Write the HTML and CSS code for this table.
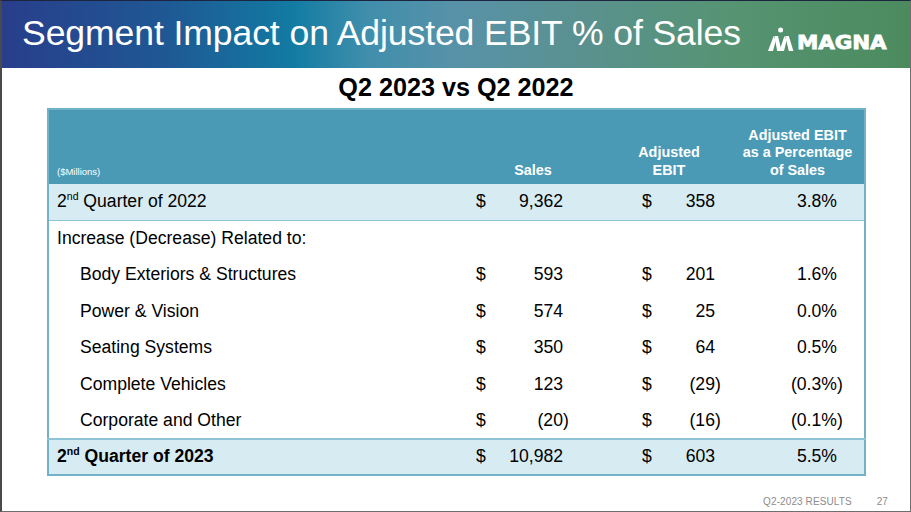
FILE: index.html
```html
<!DOCTYPE html>
<html lang="en">
<head>
<meta charset="utf-8">
<title>Segment Impact on Adjusted EBIT % of Sales</title>
<link rel="stylesheet" href="styles.css">
</head>
<body>
<div class="slide">
  <header class="band">
    <h1 class="title">Segment Impact on Adjusted EBIT % of Sales</h1>
    <div class="logo">
      <svg class="logo-mark" viewBox="0 0 26 24" width="26" height="24" aria-hidden="true">
        <circle cx="12.6" cy="3" r="2.5" fill="#fff"/>
        <polygon points="0,24 5.6,9 7.8,13.6 5,24" fill="#fff"/>
        <polygon points="6.4,9 10,9 13.6,24 9.2,24" fill="#fff"/>
        <polygon points="11.4,24 16.4,9 18.6,13.6 16,24" fill="#fff"/>
        <polygon points="17.2,9 20.8,9 25.4,24 20.8,24" fill="#fff"/>
      </svg>
      <span class="logo-word">MAGNA</span>
    </div>
  </header>

  <h2 class="subtitle">Q2 2023 vs Q2 2022</h2>

  <table class="grid">
    <colgroup>
      <col class="c-label">
      <col class="c-sales">
      <col class="c-ebit">
      <col class="c-pct">
    </colgroup>
    <thead>
      <tr class="head">
        <th class="h-label">($Millions)</th>
        <th class="h-sales">Sales</th>
        <th class="h-ebit">Adjusted<br>EBIT</th>
        <th class="h-pct">Adjusted EBIT<br>as a Percentage<br>of Sales</th>
      </tr>
    </thead>
    <tbody>
      <tr class="shade first">
        <td class="label">2<sup>nd</sup> Quarter of 2022</td>
        <td class="sales"><span class="cur">$</span><span class="num">9,362</span></td>
        <td class="ebit"><span class="cur">$</span><span class="num">358</span></td>
        <td class="pct"><span class="num">3.8%</span></td>
      </tr>
      <tr class="plain">
        <td class="label" colspan="4">Increase (Decrease) Related to:</td>
      </tr>
      <tr class="plain">
        <td class="label indent">Body Exteriors &amp; Structures</td>
        <td class="sales"><span class="cur">$</span><span class="num">593</span></td>
        <td class="ebit"><span class="cur">$</span><span class="num">201</span></td>
        <td class="pct"><span class="num">1.6%</span></td>
      </tr>
      <tr class="plain">
        <td class="label indent">Power &amp; Vision</td>
        <td class="sales"><span class="cur">$</span><span class="num">574</span></td>
        <td class="ebit"><span class="cur">$</span><span class="num">25</span></td>
        <td class="pct"><span class="num">0.0%</span></td>
      </tr>
      <tr class="plain">
        <td class="label indent">Seating Systems</td>
        <td class="sales"><span class="cur">$</span><span class="num">350</span></td>
        <td class="ebit"><span class="cur">$</span><span class="num">64</span></td>
        <td class="pct"><span class="num">0.5%</span></td>
      </tr>
      <tr class="plain">
        <td class="label indent">Complete Vehicles</td>
        <td class="sales"><span class="cur">$</span><span class="num">123</span></td>
        <td class="ebit"><span class="cur">$</span><span class="num">(29<span class="cp">)</span></span></td>
        <td class="pct"><span class="num">(0.3%<span class="cp">)</span></span></td>
      </tr>
      <tr class="plain">
        <td class="label indent">Corporate and Other</td>
        <td class="sales"><span class="cur">$</span><span class="num">(20<span class="cp">)</span></span></td>
        <td class="ebit"><span class="cur">$</span><span class="num">(16<span class="cp">)</span></span></td>
        <td class="pct"><span class="num">(0.1%<span class="cp">)</span></span></td>
      </tr>
      <tr class="shade last">
        <td class="label strong">2<sup>nd</sup> Quarter of 2023</td>
        <td class="sales"><span class="cur">$</span><span class="num">10,982</span></td>
        <td class="ebit"><span class="cur">$</span><span class="num">603</span></td>
        <td class="pct"><span class="num">5.5%</span></td>
      </tr>
    </tbody>
  </table>

  <footer class="foot">
    <span class="foot-text">Q2-2023 RESULTS</span>
    <span class="foot-page">27</span>
  </footer>
</div>
</body>
</html>
```

FILE: styles.css
```css
html, body {
  margin: 0;
  padding: 0;
  background: #ffffff;
}

.slide {
  width: 911px;
  height: 512px;
  box-sizing: border-box;
  border: 1px solid #6e6e6e;
  border-left: 2px solid #4a4a4a;
  border-top: 1px solid #1c2440;
  display: flex;
  flex-direction: column;
  font-family: "Liberation Sans", Arial, sans-serif;
  color: #000;
  overflow: hidden;
}

/* ---------- header band ---------- */
.band {
  height: 67px;
  flex: none;
  display: flex;
  align-items: center;
  justify-content: space-between;
  padding: 0 24px 0 20px;
  background: linear-gradient(90deg,
    #283e8b 0%,
    #1f5894 18%,
    #127ba2 32%,
    #3f8eac 40%,
    #5892a8 50%,
    #5a918f 64%,
    #569473 80%,
    #4c8a5e 100%);
}

.title {
  margin: 0;
  font-weight: normal;
  font-size: 35.6px;
  line-height: 40px;
  color: #ffffff;
  letter-spacing: -0.1px;
  padding-bottom: 3px;
}

.logo {
  display: flex;
  align-items: flex-end;
  gap: 3px;
  margin-top: 8px;
}

.logo-mark {
  display: block;
}

.logo-word {
  font-family: "DejaVu Sans", sans-serif;
  font-weight: bold;
  font-size: 19.5px;
  line-height: 16px;
  color: #ffffff;
  -webkit-text-stroke: 0.8px #ffffff;
  letter-spacing: -0.1px;
  transform: scaleX(1.1);
  transform-origin: left bottom;
  margin-right: 8px;
}

/* ---------- subtitle ---------- */
.subtitle {
  margin: 0;
  height: 40px;
  line-height: 38px;
  text-align: center;
  font-size: 25.2px;
  font-weight: bold;
  flex: none;
}

/* ---------- table ---------- */
.grid {
  margin-left: 45px;
  width: 817px;
  border-collapse: collapse;
  table-layout: fixed;
  border: 2px solid #72b2c7;
  font-size: 17.6px;
}

.c-label { width: 423px; }
.c-sales { width: 110px; }
.c-ebit  { width: 150px; }
.c-pct   { width: 134px; }

.grid th,
.grid td {
  padding: 0;
}

.head {
  height: 75px;
  background: #4a9ab6;
  color: #ffffff;
}

.head th {
  vertical-align: bottom;
  font-size: 14.4px;
  line-height: 17.5px;
  font-weight: bold;
  padding-bottom: 5px;
  text-align: center;
}

.head .h-label {
  text-align: left;
  font-weight: normal;
  font-size: 9.5px;
  padding-left: 8px;
  padding-bottom: 4px;
}

.head .h-sales { padding-left: 14px; }
.head .h-ebit  { padding-left: 26px; }
.head .h-pct   { padding-right: 0; padding-left: 0; }

.grid tbody tr {
  height: 36.4px;
}

.shade {
  background: #d7ebf2;
}

.first {
  border-bottom: 1px solid #8cc4d5;
}

.last {
  border-top: 2px solid #8cc4d5;
  height: 37px;
}

.label {
  padding-left: 8px !important;
  white-space: nowrap;
}

.label.indent {
  padding-left: 31px !important;
}

.label.strong {
  font-weight: bold;
}

.label sup {
  font-size: 10.5px;
  line-height: 0;
  vertical-align: 7px;
}

.sales,
.ebit {
  white-space: nowrap;
}

.sales .cur,
.ebit .cur {
  float: left;
}

.sales .num,
.ebit .num,
.pct .num {
  float: right;
}

.sales { padding-left: 5px !important; padding-right: 18px !important; }
.ebit  { padding-left: 61px !important; padding-right: 16px !important; }
.pct   { padding-right: 27px !important; }

.cp {
  margin-right: -5.8px;
}

/* ---------- footer ---------- */
.foot {
  margin-top: auto;
  display: flex;
  justify-content: flex-end;
  gap: 25px;
  padding: 0 22px 4px 0;
  font-size: 10px;
  color: #8c8c8c;
  letter-spacing: 0.1px;
}
```
